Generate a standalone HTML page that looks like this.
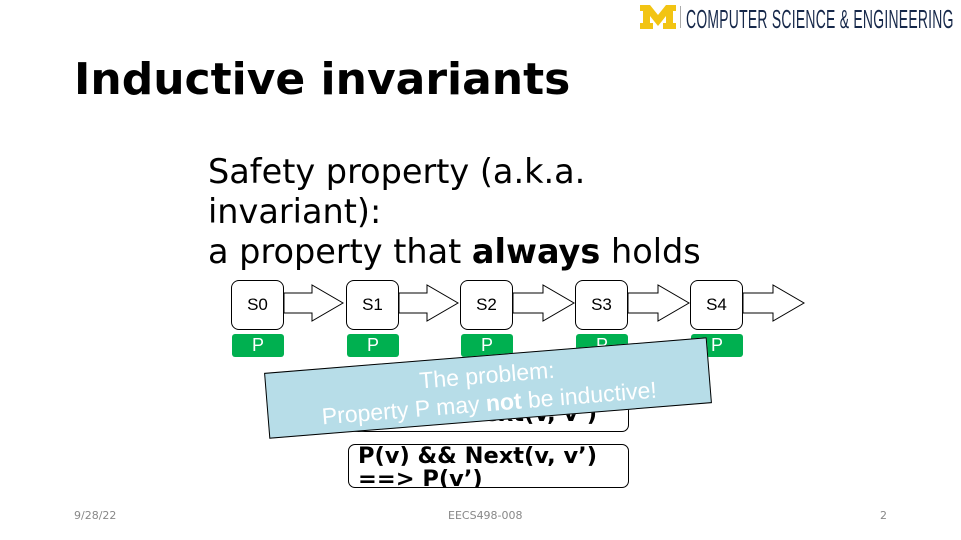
<!DOCTYPE html><html><head><style>
body{margin:0;width:961px;height:540px;overflow:hidden;background:#fff;font-family:"DejaVu Sans","Liberation Sans",sans-serif;position:relative}
.a{position:absolute}
.st{position:absolute;top:280px;width:51px;height:48px;border:1.3px solid #000;border-radius:8px;font-family:"Liberation Sans",sans-serif;font-size:17px;display:flex;align-items:center;justify-content:center;background:#fff}
.p{position:absolute;top:334px;width:52px;height:23px;background:#00b050;border-radius:3px;color:#fff;font-family:"Liberation Sans",sans-serif;font-size:18px;text-align:center;line-height:23px}
.bx{position:absolute;left:348px;width:281px;border:1.3px solid #000;border-radius:7px;font-weight:bold;font-size:22.5px;line-height:23px;padding-left:9px;box-sizing:border-box;overflow:hidden;background:#fff;white-space:nowrap}
</style></head><body>
<div class="a" style="left:640px;top:5px;font-family:'Liberation Sans',sans-serif;">
<svg width="36" height="24" viewBox="0 0 36 24" style="position:absolute;left:0;top:0"><path d="M0 0h10l8 10 8-10h10v6h-3v12h3v6h-13v-6h3v-7l-8 10-8-10v7h3v6H0v-6h3V6H0z" fill="#f2c413"/></svg>
<div class="a" style="left:40px;top:1px;width:1px;height:22px;background:#aaa"></div>
<div class="a" style="left:46px;top:-1px;font-size:26px;color:#16284a;white-space:nowrap;transform:scaleX(0.535);transform-origin:left top;letter-spacing:0.5px">COMPUTER SCIENCE &amp; ENGINEERING</div>
</div>
<div class="a" style="left:74px;top:54px;font-size:44px;font-weight:bold">Inductive invariants</div>
<div class="a" style="left:208px;top:152px;font-size:33.5px;line-height:40px">Safety property (a.k.a.<br>invariant):<br>a property that <b>always</b> holds</div>
<svg class="a" style="left:0;top:0" width="961" height="540">
<g fill="#fff" stroke="#000" stroke-width="1">
<path d="M284 293h28v-8l31 18-31 18v-8h-28z"/>
<path d="M399 293h28v-8l31 18-31 18v-8h-28z"/>
<path d="M513 293h30v-8l31 18-31 18v-8h-30z"/>
<path d="M628 293h30v-8l31 18-31 18v-8h-30z"/>
<path d="M743 293h30v-8l31 18-31 18v-8h-30z"/>
</g></svg>
<div class="st" style="left:231px">S0</div><div class="st" style="left:346px">S1</div><div class="st" style="left:460px">S2</div><div class="st" style="left:575px">S3</div><div class="st" style="left:690px">S4</div>
<div class="p" style="left:232px">P</div><div class="p" style="left:347px">P</div><div class="p" style="left:461px">P</div><div class="p" style="left:576px">P</div><div class="p" style="left:691px">P</div>
<div class="bx" style="top:395px;height:37px;padding-top:7px">P(v) &amp;&amp; Next(v, v’)</div>
<div class="bx" style="top:444px;height:44px;padding-top:0">P(v) &amp;&amp; Next(v, v’)<br>==&gt; P(v’)</div>
<div class="a" style="left:266px;top:355px;width:444px;height:66px;background:#b7dde8;border:1.5px solid #000;transform:rotate(-4.6deg);color:#fff;font-family:'Liberation Sans',sans-serif;font-size:23px;text-align:center;line-height:28px;padding-top:5px;box-sizing:border-box;white-space:nowrap">The problem:<br>Property P may <b>not</b> be inductive!</div>
<div class="a" style="left:74px;top:509px;font-size:11px;color:#888">9/28/22</div>
<div class="a" style="left:448px;top:509px;font-size:11px;color:#888">EECS498-008</div>
<div class="a" style="left:880px;top:509px;font-size:11px;color:#888">2</div>
</body></html>
